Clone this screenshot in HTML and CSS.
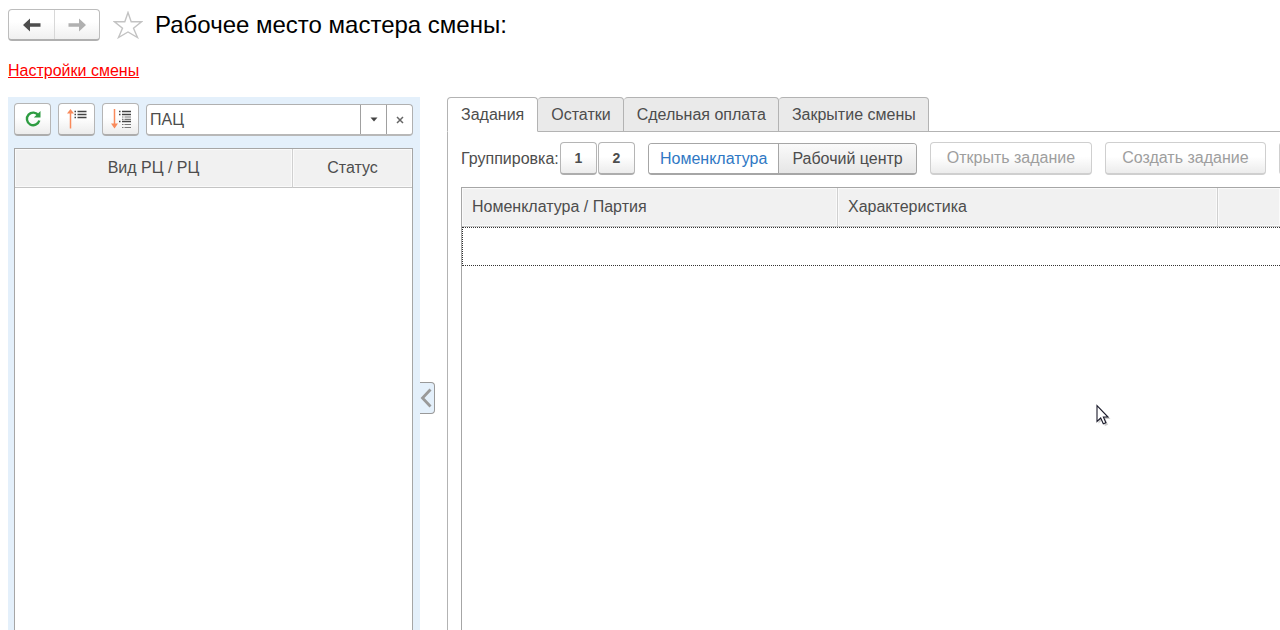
FILE: index.html
```html
<!DOCTYPE html>
<html lang="ru">
<head>
<meta charset="utf-8">
<title>Рабочее место мастера смены</title>
<link rel="stylesheet" href="styles.css">
</head>
<body>
<div class="page">
  <header class="header">
    <div class="nav">
      <button class="nav-btn" type="button" aria-label="Назад"><svg width="18" height="14" viewBox="0 0 18 14"><path d="M0 7 7 .5V5.200H17.500V8.800H7V13.500Z" fill="#4d4d4d"/></svg></button>
      <button class="nav-btn" type="button" aria-label="Вперед"><svg width="18" height="14" viewBox="0 0 18 14"><path d="M18 7 11 .5V5.200H.5V8.800H11V13.500Z" fill="#b0b0b0"/></svg></button>
    </div>
    <button class="star" type="button" aria-label="В избранное"><svg width="30" height="28" viewBox="0 0 30 28"><path d="M15 1.500 18.200 10.800H28.500L20.500 17.200 24.500 26.500 15 21 5.500 26.500 9.500 17.200 1.500 10.800H11.800Z" fill="#fff" stroke="#c3c3c3" stroke-width="1.400"/></svg></button>
    <h1 class="title">Рабочее место мастера смены:</h1>
  </header>
  <div class="settings"><a class="settings-link" href="#">Настройки смены</a></div>
  <main class="work">
    <section class="side">
      <div class="side-tools">
        <button class="btn icon-btn" type="button" aria-label="Обновить"><svg width="18" height="18" viewBox="0 0 18 18"><path d="M14.500 5.500A6.300 6.300 0 1 0 15.300 10.500" fill="none" stroke="#2e9c42" stroke-width="2.400"/><path d="M16.500 1V7.500H9.800Z" fill="#2e9c42"/></svg></button>
        <button class="btn icon-btn" type="button" aria-label="Свернуть"><svg width="22" height="22" viewBox="0 0 22 22"><path d="M4.500 20.500V3" stroke="#f98a5b" stroke-width="1.500"/><path d="M1 5.500 4.500 1 8 5.500Z" fill="#f98a5b"/><path d="M8.500 3.500h1.500M8.500 6.500h1.500M8.500 9.500h1.500M11.500 3.500h9M11.500 6.500h9M11.500 9.500h9" stroke="#444" stroke-width="1.500"/></svg></button>
        <button class="btn icon-btn" type="button" aria-label="Развернуть"><svg width="22" height="22" viewBox="0 0 22 22"><path d="M4.500 1V18" stroke="#f98a5b" stroke-width="1.500"/><path d="M1 15.500h7L4.500 20.500Z" fill="#f98a5b"/><path d="M9 3.500h1.500M9 6.500h1.500M9 13.500h1.500M12 3.500h9M12 6.500h9M12 13.500h9" stroke="#444" stroke-width="1.400"/><path d="M12 9h1.500M12 11.300h1.500M12 16.500h1.500M12 19.500h1.500M14.500 9h6.500M14.500 11.300h6.500M14.500 16.500h6.500M14.500 19.500h6.500" stroke="#777" stroke-width="1.200"/></svg></button>
        <div class="combo">
          <input class="combo-input" type="text" value="ПАЦ" aria-label="Подразделение">
          <button class="combo-btn" type="button" aria-label="Выбрать"><svg width="8" height="5" viewBox="0 0 8 5"><path d="M.5 .5h7L4 4.500Z" fill="#444"/></svg></button>
          <button class="combo-btn" type="button" aria-label="Очистить"><svg width="8" height="8" viewBox="0 0 8 8"><path d="M1 1 7 7M7 1 1 7" stroke="#666" stroke-width="1.500"/></svg></button>
        </div>
      </div>
      <div class="list">
        <table class="grid">
          <thead><tr><th class="centered">Вид РЦ / РЦ</th><th class="centered status">Статус</th></tr></thead>
        </table>
      </div>
    </section>
    <div class="splitter">
      <button class="collapse" type="button" aria-label="Скрыть панель"><svg width="12" height="20" viewBox="0 0 12 20"><path d="M10.500 1.500 2.500 10 10.500 18.500" fill="none" stroke="#999" stroke-width="2.800"/></svg></button>
    </div>
    <section class="content">
      <div class="tabs" role="tablist">
        <button class="tab active" type="button" role="tab" aria-selected="true">Задания</button>
        <button class="tab" type="button" role="tab">Остатки</button>
        <button class="tab" type="button" role="tab">Сдельная оплата</button>
        <button class="tab" type="button" role="tab">Закрытие смены</button>
        <div class="tab-rest"></div>
      </div>
      <div class="pane">
        <div class="tools">
          <div class="group">
            <span class="label">Группировка:</span>
            <button class="btn level" type="button">1</button>
            <button class="btn level" type="button">2</button>
          </div>
          <div class="switch">
            <button class="switch-btn chosen" type="button">Номенклатура</button>
            <button class="switch-btn" type="button">Рабочий центр</button>
          </div>
          <button class="btn action" type="button" disabled>Открыть задание</button>
          <button class="btn action" type="button" disabled>Создать задание</button>
          <button class="btn action" type="button" disabled aria-label="Ещё"></button>
        </div>
        <div class="list tasks">
          <table class="grid tasks-grid">
            <thead><tr><th class="item">Номенклатура / Партия</th><th class="feature">Характеристика</th><th></th></tr></thead>
            <tbody><tr class="current"><td colspan="3"></td></tr></tbody>
          </table>
        </div>
      </div>
    </section>
  </main>
</div>
<svg class="cursor" width="18" height="24" viewBox="0 0 18 24"><path d="M2.500 3V19.500L6.300 16 9 22 12 20.800 9.500 15H14.500Z" fill="#999" opacity=".5"/><path d="M1 1.500V17.500L4.700 14 7.300 19.800 9.900 18.700 7.400 13H12Z" fill="#fff" stroke="#1b1b2b" stroke-width="1.100"/></svg>
</body>
</html>
```
FILE: styles.css
```css
* { box-sizing: border-box; }
body {
  margin: 0;
  background: #fff;
  color: #4d4d4d;
  font-family: "Liberation Sans", Arial, sans-serif;
  font-size: 16px;
  overflow: hidden;
}
button, input { font: inherit; color: inherit; padding: 0; margin: 0; }
svg { display: block; }
.page { display: flex; flex-direction: column; height: 100vh; padding: 9px 0 0 8px; }
.header { display: flex; align-items: center; height: 32px; }
.nav {
  display: flex;
  height: 32px;
  border: 1px solid #bdbdbd;
  border-bottom: 2px solid #b0b0b0;
  border-radius: 4px;
  background: linear-gradient(#fff 40%, #f0f0f0);
}
.nav-btn { display: flex; align-items: center; justify-content: center; width: 45px; border: 0; background: none; }
.nav-btn + .nav-btn { border-left: 1px solid #d8d8d8; }
.star { margin-left: 13px; border: 0; background: none; }
.title { margin: 0 0 0 12px; font-size: 24px; font-weight: 400; color: #000; white-space: nowrap; }
.settings { padding-top: 20px; height: 56px; line-height: 19px; }
.settings-link { color: #f00; }
.work { display: flex; flex: 1; min-height: 0; }
.side { display: flex; flex-direction: column; flex: none; width: 412px; padding: 6px 7px 0 6px; background: #e4f0fb; }
.side-tools { display: flex; gap: 7px; height: 33px; margin-bottom: 12px; }
.btn {
  display: flex;
  align-items: center;
  justify-content: center;
  height: 33px;
  border: 1px solid #b5b5b5;
  border-bottom: 2px solid #adadad;
  border-radius: 4px;
  background: linear-gradient(#fff 45%, #ececec);
}
.icon-btn { width: 37px; }
.combo {
  display: flex;
  flex: 1;
  height: 32px;
  margin-top: 1px;
  border: 1px solid #b0b0b0;
  border-bottom: 2px solid #b8b8b8;
  border-radius: 4px;
  background: #fff;
  overflow: hidden;
}
.combo-input { flex: 1; min-width: 0; padding: 0 3px; border: 0; background: none; outline: 0; }
.combo-btn { display: flex; align-items: center; justify-content: center; width: 26px; border: 0; border-left: 1px solid #a0a0a0; background: none; }
.list { flex: 1; border: 1px solid #a6a6a6; border-bottom: 0; background: #fff; }
.grid { width: 100%; border-collapse: separate; border-spacing: 0; table-layout: fixed; }
.grid th {
  height: 39px;
  padding: 0 10px;
  border-bottom: 1px solid #c4c4c4;
  background: #f1f1f1;
  box-shadow: inset 0 0 0 1px #fafafa;
  font-weight: 400;
  text-align: left;
}
.grid th + th { border-left: 1px solid #d0d0d0; }
.grid .centered { text-align: center; }
.grid .status { width: 120px; }
.splitter { flex: none; width: 27px; padding-top: 285px; }
.collapse {
  display: flex;
  align-items: center;
  width: 15px;
  height: 32px;
  border: 1px solid #999;
  border-left: 0;
  border-radius: 0 4px 4px 0;
  background: #e4f0fb;
}
.content { display: flex; flex: 1; flex-direction: column; min-width: 0; }
.tabs { display: flex; height: 35px; }
.tab {
  padding: 0 12px 0 13px;
  border: 1px solid #b3b3b3;
  border-left-width: 0;
  border-radius: 4px 4px 0 0;
  background: #eaeaea;
  white-space: nowrap;
}
.tab.active { padding: 0 13px; border-left-width: 1px; border-bottom-color: #fff; background: #fff; }
.tab-rest { flex: 1; border-bottom: 1px solid #b3b3b3; }
.pane { display: flex; flex: 1; flex-direction: column; min-width: 0; padding: 10px 0 0 13px; border-left: 1px solid #b3b3b3; overflow: hidden; }
.tools { display: flex; gap: 13px; height: 33px; margin-bottom: 12px; }
.tools > * { flex: none; }
.group { display: flex; align-items: center; }
.label { width: 99px; white-space: nowrap; }
.level { width: 37px; font-size: 14px; font-weight: 700; }
.level + .level { margin-left: 1px; }
.switch { display: flex; height: 32px; margin-top: 1px; border: 1px solid #a6a6a6; border-bottom-width: 2px; border-radius: 4px; overflow: hidden; }
.switch-btn { padding: 0 13px; border: 0; background: linear-gradient(#fafafa, #e6e6e6); white-space: nowrap; }
.switch-btn + .switch-btn { border-left: 1px solid #a6a6a6; }
.switch-btn.chosen { padding: 0 11px; background: #fff; color: #2f78c4; }
.action { padding: 0 16px; border-color: #cfcfcf; color: #9e9e9e; white-space: nowrap; }
.tasks { border-right: 0; }
.grid .item { width: 375px; }
.grid .feature { width: 380px; }
.current td { height: 39px; border: 1px dotted #333; border-right: 0; }
.cursor { position: absolute; left: 1096px; top: 404px; }
```
